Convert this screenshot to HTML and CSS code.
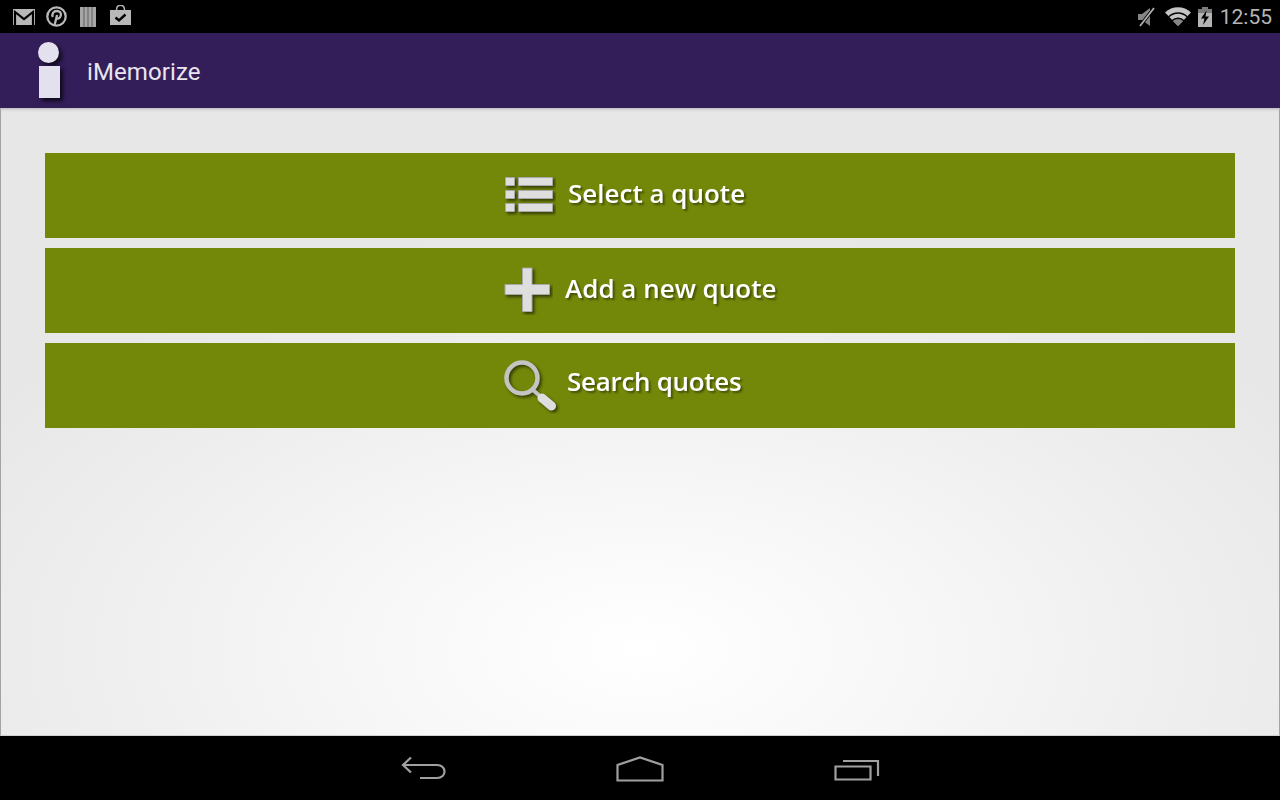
FILE: index.html
```html
<!DOCTYPE html>
<html>
<head>
    <title>iMemorize</title>
    <link rel="stylesheet" href="styles.css">
</head>
<body>
    <div class="status-bar">
        <div class="status-icons">
            <svg width="22" height="16" viewBox="0 0 22 16"><path d="M0 0h22v16H0z" fill="#b8b8b8"/><path d="M2 16V3l9 7 9-7v13" fill="none" stroke="#000" stroke-width="2.2"/></svg>
            <svg width="23" height="21" viewBox="0 0 23 21"><circle cx="10.500" cy="10.500" r="9.200" fill="none" stroke="#b8b8b8" stroke-width="2.300"/><path d="M8.500 19.500l2.600-10.500M6.800 11C5.400 7.600 7.800 5 10.800 5c3 0 4.600 2.100 4 4.600-.6 2.800-3.300 3.700-4.900 2.300" fill="none" stroke="#b8b8b8" stroke-width="2.300"/></svg>
            <svg width="19" height="20" viewBox="0 0 19 20"><path d="M0 0h16v20H0z" fill="#a6a6a6"/><path d="M4 0v20M8 0v20M12 0v20" stroke="#606060" stroke-width="1"/></svg>
            <svg width="21" height="24" viewBox="0 0 21 24"><path d="M0 5h21v15H0z" fill="#b8b8b8"/><path d="M6.500 5c0-6.500 8-6.500 8 0" fill="none" stroke="#b8b8b8" stroke-width="1.500"/><path d="M5.500 12.500l3.500 3 6.500-6" fill="none" stroke="#000" stroke-width="2.400"/></svg>
        </div>
        <div class="status-right">
            <svg width="21" height="20" viewBox="0 0 21 20"><path d="M1 7h4l8-6v18l-8-6H1z" fill="#858585"/><path d="M17 1L3 19" stroke="#000" stroke-width="3.400"/><path d="M17 1L3 19" stroke="#b0b0b0" stroke-width="1.800"/></svg>
            <svg width="26" height="20" viewBox="0 0 26 20"><path d="M13 19L0 5.500C7-1.500 19-1.500 26 5.500z" fill="#c4c4c4"/><path d="M13 19L7.500 13.500A8 8 0 0 1 18.500 13.500z" fill="#858585"/><path d="M3.800 9.800A13 13 0 0 1 22.200 9.800M7 13.800A8.500 8.500 0 0 1 19 13.800" fill="none" stroke="#000" stroke-width="1.400"/></svg>
            <svg width="14" height="20" viewBox="0 0 14 20"><path d="M4 0h6v2h4v18H0V2h4z" fill="#b4b4b4"/><path d="M4 0h6v2h4v4H0V2h4z" fill="#7c7c7c"/><path d="M8.500 3.500L3 11.500h3.500L5 18l6-8.500H7.500z" fill="#000"/></svg>
            <span class="clock">12:55</span>
        </div>
    </div>

    <div class="action-bar">
        <div class="logo">
            <div class="logo-dot"></div>
            <div class="logo-stem"></div>
        </div>
        <div class="app-title">iMemorize</div>
    </div>

    <div class="content">
        <div class="menu-btn">
            <span class="btn-inner">
                <svg class="btn-icon" width="52" height="40" viewBox="0 0 52 40"><g class="btn-shape" fill="#dedede" stroke="#a8a8a8" stroke-width="1"><path d="M1.500 1.500h9v8h-9zM14.500 1.500h34v8h-34zM1.500 14.500h9v8h-9zM14.500 14.500h34v8h-34zM1.500 27.500h9v8h-9zM14.500 27.500h34v8h-34z"/></g></svg>
                <span class="btn-label">Select a quote</span>
            </span>
        </div>
        <div class="menu-btn">
            <span class="btn-inner">
                <svg class="btn-icon" width="49" height="48" viewBox="0 0 49 48"><path class="btn-shape" d="M18.500 1h9.500v16.500h17.500v10H28v17h-9.500v-17H1v-10h17.500z" fill="#dedede" stroke="#a8a8a8" stroke-width="1"/></svg>
                <span class="btn-label">Add a new quote</span>
            </span>
        </div>
        <div class="menu-btn btn-search">
            <span class="btn-inner">
                <svg class="btn-icon" width="56" height="56" viewBox="0 0 56 56"><g class="btn-shape" fill="none"><circle cx="18" cy="20" r="15.500" stroke="#c4c4c4" stroke-width="4.500"/><path d="M29 32l8 7" stroke="#c4c4c4" stroke-width="4"/><path d="M38 40l9.500 8" stroke="#dedede" stroke-width="9" stroke-linecap="round"/></g></svg>
                <span class="btn-label">Search quotes</span>
            </span>
        </div>
    </div>

    <div class="nav-bar">
        <svg width="46" height="26" viewBox="0 0 46 26"><path d="M11 1.500L3 9l8 7.500M3 9h34c10 0 10 13 0 13H20" fill="none" stroke="#a0a0a0" stroke-width="2.200"/></svg>
        <svg width="48" height="26" viewBox="0 0 48 26"><path d="M1.500 24.500V9L24 1.500 46.500 9v15.500z" fill="none" stroke="#a0a0a0" stroke-width="2.200"/></svg>
        <svg width="46" height="26" viewBox="0 0 46 26"><path d="M1.500 10.500h35v13h-35zM9 5h35v15" fill="none" stroke="#a0a0a0" stroke-width="2.200"/></svg>
    </div>
</body>
</html>
```

FILE: styles.css
```css
body {
    margin: 0;
    height: 800px;
    display: flex;
    flex-direction: column;
    overflow: hidden;
    background: #000;
    font-family: 'Roboto', sans-serif;
}
.status-bar {
    height: 33px;
    background: #000;
    display: flex;
    justify-content: space-between;
    align-items: center;
    padding: 0 8px 0 13px;
}
.status-icons {
    display: flex;
    align-items: center;
    gap: 11px;
}
.status-right {
    display: flex;
    align-items: center;
    gap: 7px;
}
.status-bar svg {
    filter: blur(0.4px);
}
.clock {
    color: #b4b4b4;
    font-size: 21px;
    margin-left: 1px;
}
.action-bar {
    height: 75px;
    background: #331e5a;
    display: flex;
    align-items: center;
    padding-left: 38px;
}
.logo {
    width: 22px;
    height: 58px;
    display: flex;
    flex-direction: column;
    gap: 3px;
    margin-right: 27px;
}
.logo-dot {
    width: 21px;
    height: 21px;
    border-radius: 50%;
    background: #e4e1ee;
    box-shadow: 3px 3px 4px rgba(0,0,0,0.7);
}
.logo-stem {
    width: 21px;
    height: 32px;
    margin-left: 1px;
    background: #e4e1ee;
    box-shadow: 3px 3px 4px rgba(0,0,0,0.7);
}
.app-title {
    color: #e9e6f0;
    font-size: 24px;
    letter-spacing: 0.1px;
    padding-top: 2px;
}
.content {
    flex: 1;
    box-sizing: border-box;
    display: flex;
    flex-direction: column;
    gap: 10px;
    border: 1px solid #a4a4a4;
    border-top-color: #c4c4c4;
    border-bottom-color: #d0d0d0;
    padding: 44px 44px 0;
    background: radial-gradient(ellipse 800px 430px at 640px 540px, #ffffff 0%, #f7f7f7 35%, #eeeeee 70%, #e7e7e7 100%);
    box-shadow: inset 0 3px 3px -2px rgba(0,0,0,0.12);
}
.menu-btn {
    height: 85px;
    background: #738709;
    display: flex;
    align-items: center;
    padding-left: 459px;
}
.btn-inner {
    display: flex;
    align-items: center;
    gap: 12px;
    filter: blur(0.4px);
}
.btn-search .btn-inner {
    gap: 7px;
}
.btn-icon {
    flex: none;
}
.btn-shape {
    filter: drop-shadow(2px 2px 1.500px rgba(0,0,0,0.55));
}
.btn-label {
    color: #fff;
    font-family: 'Open Sans', sans-serif;
    font-weight: 600;
    font-size: 26px;
    margin-bottom: 6px;
    text-shadow: 2px 2px 2px rgba(0,0,0,0.4);
}
.btn-search .btn-label {
    letter-spacing: -0.3px;
    margin-bottom: 10px;
}
.nav-bar {
    height: 64px;
    box-sizing: border-box;
    padding-top: 2px;
    background: #000;
    display: flex;
    justify-content: center;
    align-items: center;
    gap: 170px;
}
```
